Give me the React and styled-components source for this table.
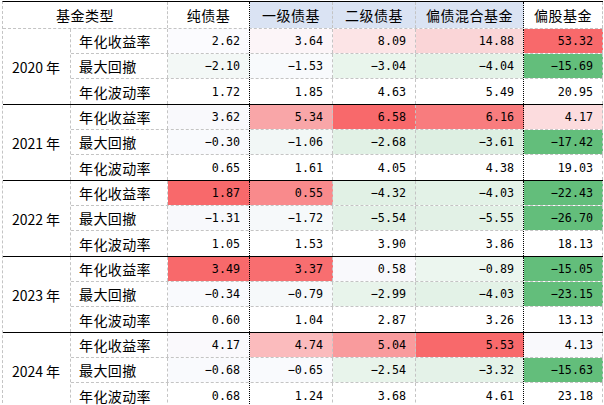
import React from 'react';
import styled, { createGlobalStyle } from 'styled-components';

const GlobalStyle = createGlobalStyle`
  body {
    margin: 0;
    background: #fff;
    font-family: "Noto Sans CJK SC", "Noto Sans", sans-serif;
    color: #000;
  }
`;

const GRID = '#c4c4c4';
const COLS = [82, 83, 83, 108, 79];
const STRONG = [true, false, false, true, false];
const HEADS = ['纯债基', '一级债基', '二级债基', '偏债混合基金', '偏股基金'];
const HEAD_BG = [null, '#dae3f3', '#dae3f3', '#dae3f3', null];
const METRICS = ['年化收益率', '最大回撤', '年化波动率'];

const W = '#f9f9fc';
const data = [
  {
    year: '2020 年',
    rows: [
      [['2.62', '#fbfbfe'], ['3.64', '#fcf5f8'], ['8.09', '#fce4e6'], ['14.88', '#fad5d7'], ['53.32', '#f8696b']],
      [['−2.10', '#f3f8f6'], ['−1.53', '#f8fafc'], ['−3.04', '#e9f5ec'], ['−4.04', '#e3f2e7'], ['−15.69', '#63be7b']],
      [['1.72'], ['1.85'], ['4.63'], ['5.49'], ['20.95']],
    ],
  },
  {
    year: '2021 年',
    rows: [
      [['3.62', W], ['5.34', '#f9a6a8'], ['6.58', '#f8696b'], ['6.16', '#f87c7e'], ['4.17', '#fcdcde']],
      [['−0.30', '#f9fafd'], ['−1.06', '#f2f7f6'], ['−2.68', '#e1f1e5'], ['−3.61', '#ddefe2'], ['−17.42', '#63be7b']],
      [['0.65'], ['1.61'], ['4.05'], ['4.38'], ['19.03']],
    ],
  },
  {
    year: '2022 年',
    rows: [
      [['1.87', '#f8696b'], ['0.55', '#f98a8c'], ['−4.32', '#e1f1e5'], ['−4.03', '#e3f2e7'], ['−22.43', '#63be7b']],
      [['−1.31', '#f8f9fc'], ['−1.72', '#f6f9fa'], ['−5.54', '#e2f1e6'], ['−5.55', '#e2f1e6'], ['−26.70', '#63be7b']],
      [['1.05'], ['1.53'], ['3.90'], ['3.86'], ['18.13']],
    ],
  },
  {
    year: '2023 年',
    rows: [
      [['3.49', '#f8696b'], ['3.37', '#f86e70'], ['0.58', W], ['−0.89', '#ecf6ef'], ['−15.05', '#63be7b']],
      [['−0.34', '#f9fafd'], ['−0.79', '#f6f9fa'], ['−2.99', '#e8f4eb'], ['−4.03', '#e3f2e7'], ['−23.15', '#63be7b']],
      [['0.60'], ['1.04'], ['2.87'], ['3.26'], ['13.13']],
    ],
  },
  {
    year: '2024 年',
    rows: [
      [['4.17', '#faf9fc'], ['4.74', '#fbbbbd'], ['5.04', '#f99b9d'], ['5.53', '#f8696b'], ['4.13', W]],
      [['−0.68', '#f9fafd'], ['−0.65', '#f9fafd'], ['−2.54', '#e8f4eb'], ['−3.32', '#e4f2e8'], ['−15.63', '#63be7b']],
      [['0.68'], ['1.24'], ['3.68'], ['4.61'], ['23.18']],
    ],
  },
];

const Table = styled.div`
  margin: 1px 0 0 2px;
  width: 601px;
  box-sizing: border-box;
  border-top: 1px solid #000;
  border-left: 1px dashed ${GRID};
  font-size: 14px;
`;

const HeadRow = styled.div`
  display: flex;
  height: 27px;
  box-sizing: border-box;
  border-bottom: 1px dashed ${GRID};
`;

const HeadCell = styled.div`
  box-sizing: border-box;
  width: ${p => p.$w}px;
  display: flex;
  align-items: center;
  justify-content: center;
  background: ${p => p.$bg || '#fff'};
  border-right: 1px ${p => (p.$strong ? 'dotted #000' : `dashed ${GRID}`)};
  letter-spacing: 0.5px;
`;

const Group = styled.div`
  display: flex;
  border-top: ${p => (p.$first ? 'none' : '1px solid #000')};
`;

const YearCell = styled.div`
  box-sizing: border-box;
  width: 68px;
  flex: none;
  display: flex;
  align-items: center;
  justify-content: center;
  border-right: 1px dashed ${GRID};
  padding-right: 1px;
`;

const Rows = styled.div`
  display: flex;
  flex-direction: column;
`;

const Row = styled.div`
  display: flex;
  height: 25px;
  box-sizing: border-box;
  border-bottom: 1px dashed ${GRID};
  &:last-child {
    border-bottom: none;
  }
`;

const LabelCell = styled.div`
  box-sizing: border-box;
  width: 97px;
  display: flex;
  align-items: center;
  padding-left: 8px;
  border-right: 1px dashed ${GRID};
  letter-spacing: 0.4px;
`;

const NumCell = styled.div`
  box-sizing: border-box;
  width: ${p => p.$w}px;
  display: flex;
  align-items: center;
  justify-content: flex-end;
  padding-right: 9px;
  background: ${p => p.$bg || '#fff'};
  border-right: 1px ${p => (p.$strong ? 'dotted #000' : `dashed ${GRID}`)};
  font-family: "DejaVu Sans Mono", "Liberation Mono", monospace;
  font-size: 11.7px;
`;

function App() {
  return (
    <>
      <GlobalStyle />
      <Table>
        <HeadRow>
          <HeadCell $w={165}>基金类型</HeadCell>
          {HEADS.map((h, i) => (
            <HeadCell key={h} $w={COLS[i]} $bg={HEAD_BG[i]} $strong={STRONG[i]}>
              {h}
            </HeadCell>
          ))}
        </HeadRow>
        {data.map((g, gi) => (
          <Group key={g.year} $first={gi === 0}>
            <YearCell>{g.year}</YearCell>
            <Rows>
              {g.rows.map((r, ri) => (
                <Row key={ri}>
                  <LabelCell>{METRICS[ri]}</LabelCell>
                  {r.map(([v, bg], ci) => (
                    <NumCell key={ci} $w={COLS[ci]} $bg={bg} $strong={STRONG[ci]}>
                      {v}
                    </NumCell>
                  ))}
                </Row>
              ))}
            </Rows>
          </Group>
        ))}
      </Table>
    </>
  );
}

export default App;
